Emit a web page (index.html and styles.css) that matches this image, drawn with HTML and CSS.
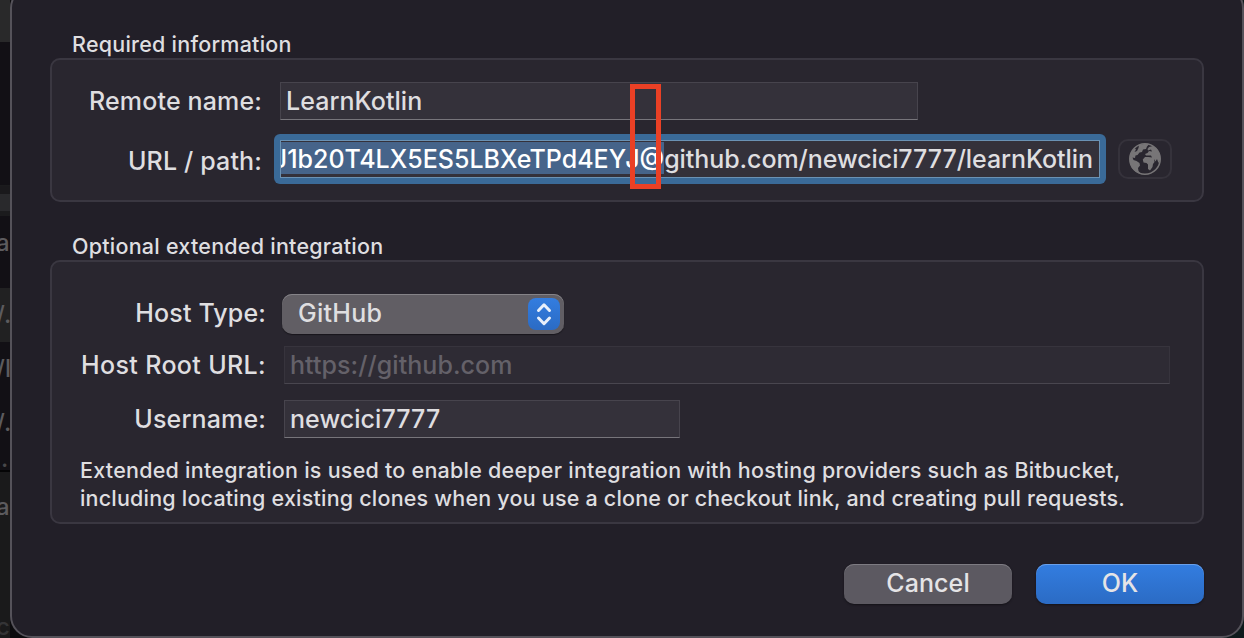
FILE: index.html
```
<!DOCTYPE html>
<html lang="en">
<head>
<meta charset="utf-8">
<title>Remote details</title>
<link rel="stylesheet" href="styles.css">
</head>
<body>
<div class="screen">
  <div class="backdrop">
    <div class="strip strip-top"></div>
    <div class="strip strip-gap"></div>
    <div class="strip strip-bar"></div>
    <div class="strip strip-a"><span>a</span></div>
    <div class="strip strip-selected"><span>/.</span></div>
    <div class="strip strip-row"><span>/l</span></div>
    <div class="strip strip-row"><span>/.</span></div>
    <div class="strip strip-row-end"><span>.</span></div>
    <div class="strip strip-lower"><span>a</span><span class="faint">c</span></div>
  </div>
  <main class="dialog">
    <h2 class="group-title">Required information</h2>
    <section class="group group-required">
      <div class="row">
        <label class="label">Remote name:</label>
        <div class="field field-name">LearnKotlin</div>
      </div>
      <div class="row row-url">
        <label class="label">URL / path:</label>
        <div class="focus-ring">
          <div class="url-input"><span class="selected">J1b20T4LX5ES5LBXeTPd4EYJ@</span><span class="url-rest">github.com/newcici7777/learnKotlin</span></div>
        </div>
        <div class="globe-button">
          <svg width="32" height="32" viewBox="0 0 32 32"><circle cx="16" cy="16" r="15.2" fill="none" stroke="#777577" stroke-width="1.6"/><path fill="#777577" d="M10 2 16 .8 20 1.2 18 3.5 17 6 14 6.5 13 9 10.5 9.5 8.5 12 6.5 12.5 6 15 3.5 14.5 4.5 17 7.5 18 10.5 20 11 22.5 9 25 9.5 28 12 31 7 29 3 25 1 20 .8 15 2.5 9 5.5 5 7 6.5 5.5 9 8 8 9.5 5Z"/><path fill="#777577" d="M20 4 24 3 28 6 31 12 31.2 17 29.5 20 28 16 26.5 18.5 25 16 25.5 19 24 21 23.5 24 21 27.5 19 26 19 21.5 17.5 20 14.5 19.5 13.8 16.5 16 14 19.5 14 23 14.5 22 12.5 19 12.5 17 12.5 16 11 18.5 10 20 8 23 8.5 22 6.5 19 7.5 18.5 6Z"/></svg>
        </div>
      </div>
      <div class="marker"></div>
    </section>
    <h2 class="group-title">Optional extended integration</h2>
    <section class="group group-optional">
      <div class="row row-host">
        <label class="label">Host Type:</label>
        <div class="select"><span>GitHub</span>
          <span class="stepper"><svg width="32" height="32" viewBox="0 0 32 32"><path d="M10.5 12.5 16 6.8l5.5 5.7M10.5 20 16 25.7l5.5-5.7" fill="none" stroke="#e8effa" stroke-width="3" stroke-linecap="round" stroke-linejoin="round"/></svg></span>
        </div>
      </div>
      <div class="row">
        <label class="label l-root">Host Root URL:</label>
        <div class="field field-root">https://github.com</div>
      </div>
      <div class="row">
        <label class="label">Username:</label>
        <div class="field field-user">newcici7777</div>
      </div>
      <p class="note">Extended integration is used to enable deeper integration with hosting providers such as Bitbucket,<br><span class="note-line">including locating existing clones when you use a clone or checkout link, and creating pull requests.</span></p>
    </section>
    <div class="actions">
      <button class="button">Cancel</button>
      <button class="button primary">OK</button>
    </div>
  </main>
</div>
</body>
</html>
```
FILE: styles.css
```
* { box-sizing: border-box; }
body {
  margin: 0;
  background: #101012;
  font-family: Inter, "Liberation Sans", sans-serif;
  font-size: 25px;
  font-weight: 450;
  line-height: 30px;
  letter-spacing: 0.05px;
  color: #dfdee0;
  overflow: hidden;
}
.screen { display: flex; width: 1244px; height: 638px; overflow: hidden; background: linear-gradient(90deg, #0c0b0e 50%, #0e1a1c 50%); }
.backdrop { width: 10px; flex: none; display: flex; flex-direction: column; color: #5c5b5e; font-size: 24px; overflow: hidden; background: #121015; }
.strip { flex: none; overflow: hidden; display: flex; flex-direction: column; }
.strip span { margin-left: -4px; white-space: nowrap; }
.strip-top { height: 42px; background: #29292a; }
.strip-gap { height: 144px; background: #121015; border-bottom: 1px solid #1b1b1d; }
.strip-bar { height: 30px; background: #29292c; border-top: 8px solid #1a191c; border-bottom: 5px solid #1b1b1d; }
.strip-a { height: 72px; padding-top: 12px; }
.strip-selected { height: 54px; background: #212122; padding-top: 12px; }
.strip-row { height: 54px; padding-top: 12px; }
.strip-row-end { height: 22px; border-bottom: 2px solid #050506; }
.strip-row-end span { margin-left: 1px; margin-top: -6px; color: #48474a; }
.strip-lower { height: 166px; background: #1a1a1b; padding-top: 20px; }
.strip-lower .faint { margin-top: 90px; color: #343436; }

.dialog {
  flex: none;
  width: 1234px;
  height: 652px;
  margin-top: -14px;
  padding: 42px 38px 0;
  background: #221f28;
  border: 2px solid #55525a;
  border-radius: 22px;
}
.group-title { margin: 0; height: 28px; padding-left: 22px; font-size: 21.5px; line-height: 28px; font-weight: 450; letter-spacing: 0.24px; white-space: nowrap; }
.group { position: relative; border: 2px solid #3a3741; border-radius: 10px; background: #29262f; }
.group-required { height: 144px; padding-top: 22px; margin-bottom: 30px; }
.group-optional { height: 264px; padding-top: 32px; }
.row { display: flex; align-items: flex-start; height: 38px; white-space: nowrap; }
.label { width: 210px; text-align: right; padding-top: 4px; flex: none; letter-spacing: 0.15px; }
.group-optional .label { width: 214px; }
.group-optional .l-root { letter-spacing: 0.35px; }
.field { height: 38px; padding: 3px 5px; margin-left: 18px; background: #34313a; border: 1px solid #47444d; border-bottom: 1px solid #77757b; }
.field-name { width: 638px; }
.row-url { height: 50px; margin-top: 14px; }
.row-url .label { padding-top: 12px; }
.focus-ring { width: 832px; height: 50px; margin-left: 12px; padding: 6px; background: #3a6a98; border-radius: 6px; flex: none; }
.url-input { height: 38px; padding: 1px 6px 0 1px; border: 1px solid #6b92b4; background: #34313a; display: flex; justify-content: flex-end; overflow: hidden; line-height: 34px; }
.selected { background: #46648a; color: #fff; height: 32px; font-weight: 500; letter-spacing: 0; }
.url-rest { letter-spacing: -0.07px; }
.globe-button { width: 54px; height: 40px; margin: 5px 0 0 12px; border: 2px solid #35323b; border-radius: 10px; display: flex; align-items: center; justify-content: center; }
.marker { position: absolute; left: 578px; top: 24px; width: 31px; height: 105px; border: 5px solid #ea4025; }
.row-host { height: 40px; margin-bottom: 12px; }
.group-optional .row:nth-child(2) { margin-bottom: 16px; }
.select { width: 282px; height: 40px; margin-left: 16px; padding: 4px 4px 4px 16px; border-radius: 10px; background: #615e64; box-shadow: inset 0 1px #858388, 0 1px 1px #18161c; display: flex; justify-content: space-between; line-height: 30px; letter-spacing: 0.25px; }
.stepper { width: 32px; height: 32px; border-radius: 8px; background: linear-gradient(#337de0, #2b6bc4); }
.stepper svg, .globe-button svg { display: block; }
.group-optional .field-root { width: 886px; background: #2e2b34; border-color: #37343d; border-bottom-color: #49464f; color: #646169; }
.field-user { width: 396px; }
.note { margin: 18px 0 0 28px; font-size: 21.5px; line-height: 28px; letter-spacing: 0.24px; white-space: nowrap; }
.note-line { letter-spacing: 0.2px; }
.actions { display: flex; justify-content: flex-end; gap: 24px; margin-top: 40px; }
.button { width: 168px; height: 40px; padding: 0 0 2px; border: 0; border-radius: 10px; font: inherit; letter-spacing: 0.1px; color: #e5e4e6; background: #5c5961; box-shadow: inset 0 1px #7d7b82, 0 1px 2px #141218; }
.primary { background: linear-gradient(#337de0, #2b6bc4); box-shadow: inset 0 1px #6aa0ea, 0 1px 2px #141218; }
```
